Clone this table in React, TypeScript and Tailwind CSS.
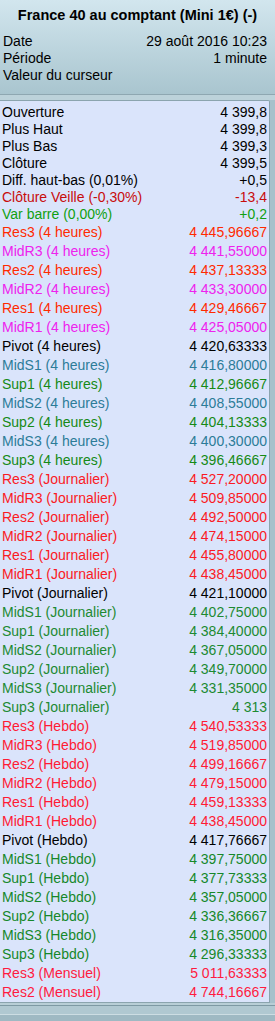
type Row = { label: string; value: string; color: string };

// couleurs par groupe
const BLACK = 'text-black';
const RES4 = 'text-[#ff2a00]';
const MIDR4 = 'text-[#ee22ee]';
const MIDS4 = 'text-[#2c7c98]';
const SUP4 = 'text-[#168a16]';
const REDJ = 'text-[#fa1a24]';
const GREENJ = 'text-[#1d8a32]';
const REDH = 'text-[#ff1a34]';
const GREENH = 'text-[#16882a]';
const REDM = 'text-[#ff1a40]';

const topRows: Row[] = [
  { label: 'Ouverture', value: '4 399,8', color: BLACK },
  { label: 'Plus Haut', value: '4 399,8', color: BLACK },
  { label: 'Plus Bas', value: '4 399,3', color: BLACK },
  { label: 'Clôture', value: '4 399,5', color: BLACK },
  { label: 'Diff. haut-bas (0,01%)', value: '+0,5', color: BLACK },
  { label: 'Clôture Veille (-0,30%)', value: '-13,4', color: 'text-[#c80c0c]' },
  { label: 'Var barre (0,00%)', value: '+0,2', color: 'text-[#10a010]' },
];

const levelRows: Row[] = [
  { label: 'Res3 (4 heures)', value: '4 445,96667', color: RES4 },
  { label: 'MidR3 (4 heures)', value: '4 441,55000', color: MIDR4 },
  { label: 'Res2 (4 heures)', value: '4 437,13333', color: RES4 },
  { label: 'MidR2 (4 heures)', value: '4 433,30000', color: MIDR4 },
  { label: 'Res1 (4 heures)', value: '4 429,46667', color: RES4 },
  { label: 'MidR1 (4 heures)', value: '4 425,05000', color: MIDR4 },
  { label: 'Pivot (4 heures)', value: '4 420,63333', color: BLACK },
  { label: 'MidS1 (4 heures)', value: '4 416,80000', color: MIDS4 },
  { label: 'Sup1 (4 heures)', value: '4 412,96667', color: SUP4 },
  { label: 'MidS2 (4 heures)', value: '4 408,55000', color: MIDS4 },
  { label: 'Sup2 (4 heures)', value: '4 404,13333', color: SUP4 },
  { label: 'MidS3 (4 heures)', value: '4 400,30000', color: MIDS4 },
  { label: 'Sup3 (4 heures)', value: '4 396,46667', color: SUP4 },
  { label: 'Res3 (Journalier)', value: '4 527,20000', color: REDJ },
  { label: 'MidR3 (Journalier)', value: '4 509,85000', color: REDJ },
  { label: 'Res2 (Journalier)', value: '4 492,50000', color: REDJ },
  { label: 'MidR2 (Journalier)', value: '4 474,15000', color: REDJ },
  { label: 'Res1 (Journalier)', value: '4 455,80000', color: REDJ },
  { label: 'MidR1 (Journalier)', value: '4 438,45000', color: REDJ },
  { label: 'Pivot (Journalier)', value: '4 421,10000', color: BLACK },
  { label: 'MidS1 (Journalier)', value: '4 402,75000', color: GREENJ },
  { label: 'Sup1 (Journalier)', value: '4 384,40000', color: GREENJ },
  { label: 'MidS2 (Journalier)', value: '4 367,05000', color: GREENJ },
  { label: 'Sup2 (Journalier)', value: '4 349,70000', color: GREENJ },
  { label: 'MidS3 (Journalier)', value: '4 331,35000', color: GREENJ },
  { label: 'Sup3 (Journalier)', value: '4 313', color: GREENJ },
  { label: 'Res3 (Hebdo)', value: '4 540,53333', color: REDH },
  { label: 'MidR3 (Hebdo)', value: '4 519,85000', color: REDH },
  { label: 'Res2 (Hebdo)', value: '4 499,16667', color: REDH },
  { label: 'MidR2 (Hebdo)', value: '4 479,15000', color: REDH },
  { label: 'Res1 (Hebdo)', value: '4 459,13333', color: REDH },
  { label: 'MidR1 (Hebdo)', value: '4 438,45000', color: REDH },
  { label: 'Pivot (Hebdo)', value: '4 417,76667', color: BLACK },
  { label: 'MidS1 (Hebdo)', value: '4 397,75000', color: GREENH },
  { label: 'Sup1 (Hebdo)', value: '4 377,73333', color: GREENH },
  { label: 'MidS2 (Hebdo)', value: '4 357,05000', color: GREENH },
  { label: 'Sup2 (Hebdo)', value: '4 336,36667', color: GREENH },
  { label: 'MidS3 (Hebdo)', value: '4 316,35000', color: GREENH },
  { label: 'Sup3 (Hebdo)', value: '4 296,33333', color: GREENH },
  { label: 'Res3 (Mensuel)', value: '5 011,63333', color: REDM },
  { label: 'Res2 (Mensuel)', value: '4 744,16667', color: REDM },
];

function DataRow({ row, tall }: { row: Row; tall?: boolean }) {
  return (
    <div
      className={`flex items-center justify-between pl-[2px] pr-[2px] whitespace-nowrap ${
        tall ? 'h-[19px]' : 'h-[17px]'
      } ${row.color}`}
    >
      <span>{row.label}</span>
      <span>{row.value}</span>
    </div>
  );
}

export default function App() {
  return (
    <div
      className="w-[275px] h-[1021px] overflow-hidden flex flex-col bg-[#a7c2cc] text-[14px] leading-[17px]"
      style={{ fontFamily: '"Liberation Sans", Arial, sans-serif' }}
    >
      {/* En-tête */}
      <div className="h-[94px] flex-none bg-gradient-to-b from-[#d2e6ee] to-[#a9c5cf] px-[3px] pt-[7px]">
        <div className="text-center font-bold text-[14.5px] text-black">France 40 au comptant (Mini 1€) (-)</div>
        <div className="mt-[9px] flex justify-between text-black">
          <span>Date</span>
          <span className="pr-[5px]">29 août 2016 10:23</span>
        </div>
        <div className="flex justify-between text-black">
          <span>Période</span>
          <span className="pr-[5px]">1 minute</span>
        </div>
        <div className="text-black">Valeur du curseur</div>
      </div>
      <div className="h-px flex-none bg-[#8ea7b1]" />
      <div className="h-[5px] flex-none bg-[#bcd2da]" />

      {/* Liste des valeurs */}
      <div className="flex-none flex">
        <div className="w-[270px] bg-[#dae4fb] border-t border-r border-b border-[#8ba4ae] rounded-tr-[2px] pt-[3px]">
          {topRows.map((r) => (
            <DataRow key={r.label} row={r} />
          ))}
          {levelRows.map((r) => (
            <DataRow key={r.label} row={r} tall />
          ))}
        </div>
        <div className="flex-1 bg-[#a6c1cb]" />
      </div>

      {/* Bas */}
      <div className="h-[2px] flex-none bg-[#b8ced6]" />
      <div className="h-px flex-none bg-[#7e99a4]" />
      <div className="h-[8px] flex-none bg-[#b0c8d1]" />
      <div className="h-px flex-none bg-[#cddde3]" />
      <div className="flex-1 bg-[#9fb9c3]" />
    </div>
  );
}
